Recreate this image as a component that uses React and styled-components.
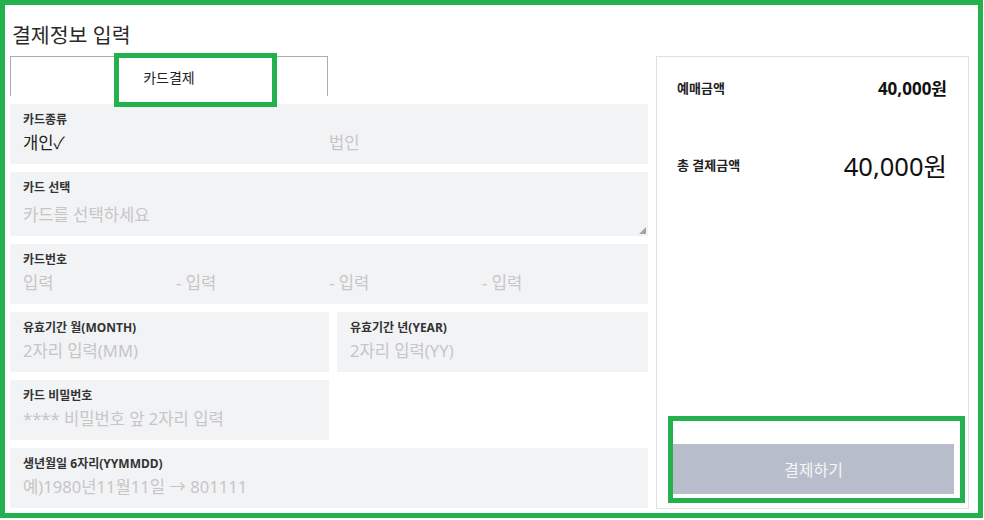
import React from "react";
import styled, { createGlobalStyle } from "styled-components";

const GlobalStyle = createGlobalStyle`
  * { box-sizing: border-box; }
  body {
    margin: 0;
    background: #fff;
    font-family: "Noto Sans", "Noto Sans CJK KR", sans-serif;
    color: #222;
    overflow: hidden;
  }
`;

const Frame = styled.div`
  position: relative;
  width: 983px;
  height: 518px;
  border: 5px solid #22b14c;
  padding: 0 9px 0 5px;
`;

const Title = styled.h2`
  margin: 0;
  padding: 17px 0 0 2px;
  margin-bottom: 8px;
  font-size: 20.5px;
  line-height: 26px;
  font-weight: 400;
  color: #2a2a2a;
`;

const Body = styled.div`
  display: flex;
  gap: 8px;
  height: 453px;
`;

const FormCol = styled.div`
  width: 638px;
  display: flex;
  flex-direction: column;
  gap: 8px;
`;

const TabBar = styled.div`
  display: flex;
  height: 40px;
`;

const Tab = styled.div`
  width: 318px;
  display: flex;
  align-items: center;
  justify-content: center;
  border: 1px solid #a9abb9;
  border-bottom: none;
  font-size: 14px;
  color: #222;
`;

const Row = styled.div`
  display: grid;
  grid-template-columns: ${(p) => p.$cols || "1fr"};
  gap: 8px;
`;

const Field = styled.div`
  position: relative;
  height: ${(p) => p.$h || 60}px;
  background: #f2f3f5;
  padding: 8px 13px 0;
`;

const Label = styled.div`
  font-size: 12px;
  line-height: 16px;
  font-weight: 700;
  color: #333;
`;

const Value = styled.div`
  margin-top: ${(p) => p.$mt || 3}px;
  font-size: 16.6px;
  line-height: 24px;
  color: #c6c6c6;
  display: grid;
  grid-template-columns: ${(p) => p.$cols || "1fr"};
  white-space: nowrap;
`;

const Choice = styled.span`
  color: ${(p) => (p.$on ? "#222" : "#c6c6c6")};
`;

const Grip = styled.span`
  position: absolute;
  right: 2px;
  bottom: 2px;
  width: 0;
  height: 0;
  border-left: 7px solid transparent;
  border-bottom: 7px solid #a3a3a3;
`;

const Panel = styled.aside`
  width: 313px;
  border: 1px solid #e0e0e0;
  display: flex;
  flex-direction: column;
  padding: 0 14px 14px 16px;
`;

const SumRow = styled.div`
  display: flex;
  align-items: center;
  justify-content: space-between;
  padding: 0 7px 0 4px;
  height: ${(p) => p.$h}px;
  margin-top: ${(p) => p.$mt}px;
`;

const SumLabel = styled.span`
  font-size: 13px;
  font-weight: 700;
  color: #222;
`;

const SumValue = styled.span`
  font-size: ${(p) => (p.$big ? 25.5 : 17)}px;
  font-weight: ${(p) => (p.$big ? 400 : 700)};
  color: #111;
`;

const PayButton = styled.button`
  margin-top: auto;
  height: 50px;
  border: none;
  background: #b8bdcb;
  color: #f6f6f6;
  font-family: inherit;
  font-size: 16px;
`;

const Marker = styled.div`
  position: absolute;
  left: ${(p) => p.$x}px;
  top: ${(p) => p.$y}px;
  width: ${(p) => p.$w}px;
  height: ${(p) => p.$h}px;
  border: 5px solid #22b14c;
  pointer-events: none;
`;

export default function App() {
  return (
    <>
      <GlobalStyle />
      <Frame>
        <Title>결제정보 입력</Title>
        <Body>
          <FormCol>
            <TabBar>
              <Tab>카드결제</Tab>
            </TabBar>

            <Field>
              <Label>카드종류</Label>
              <Value $cols="1fr 1fr">
                <Choice $on>개인✓</Choice>
                <Choice>법인</Choice>
              </Value>
            </Field>

            <Field $h={64}>
              <Label>카드 선택</Label>
              <Value $mt={7}>카드를 선택하세요</Value>
              <Grip />
            </Field>

            <Field>
              <Label>카드번호</Label>
              <Value $cols="repeat(4, 1fr)">
                <span>입력</span>
                <span>- 입력</span>
                <span>- 입력</span>
                <span>- 입력</span>
              </Value>
            </Field>

            <Row $cols="319px 1fr">
              <Field>
                <Label>유효기간 월(MONTH)</Label>
                <Value>2자리 입력(MM)</Value>
              </Field>
              <Field>
                <Label>유효기간 년(YEAR)</Label>
                <Value>2자리 입력(YY)</Value>
              </Field>
            </Row>

            <Row $cols="319px 1fr">
              <Field>
                <Label>카드 비밀번호</Label>
                <Value>**** 비밀번호 앞 2자리 입력</Value>
              </Field>
            </Row>

            <Field>
              <Label>생년월일 6자리(YYMMDD)</Label>
              <Value>예)1980년11월11일 → 801111</Value>
            </Field>
          </FormCol>

          <Panel>
            <SumRow $h={24} $mt={18}>
              <SumLabel>예매금액</SumLabel>
              <SumValue>40,000원</SumValue>
            </SumRow>
            <SumRow $h={36} $mt={47}>
              <SumLabel>총 결제금액</SumLabel>
              <SumValue $big>40,000원</SumValue>
            </SumRow>
            <PayButton>결제하기</PayButton>
          </Panel>
        </Body>

        <Marker $x={109} $y={48} $w={163} $h={54} />
        <Marker $x={663} $y={411} $w={297} $h={87} />
      </Frame>
    </>
  );
}
